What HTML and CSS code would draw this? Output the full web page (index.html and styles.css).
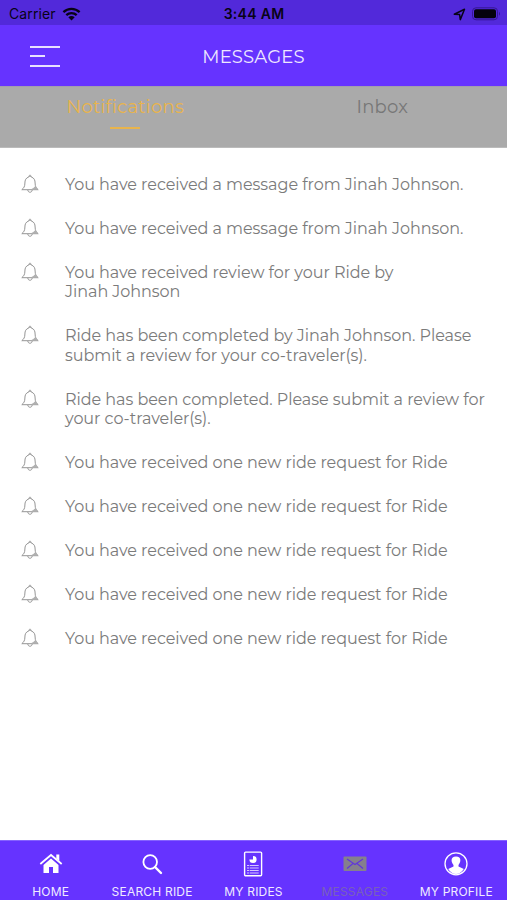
FILE: index.html
```html
<!DOCTYPE html>
<html lang="en">
<head>
<meta charset="utf-8">
<title>Messages</title>
<link rel="stylesheet" href="styles.css">
</head>
<body>
<svg class="defs" width="0" height="0" aria-hidden="true">
  <symbol id="bell" viewBox="0 0 18 20">
    <path d="M7.8 3C7.8 .6 10.2 .6 10.2 3C13.2 3.8 14.1 6.2 14.1 9C14.1 12.6 15.2 14 17.2 15.7H.8C2.8 14 3.9 12.6 3.9 9C3.9 6.2 4.8 3.8 7.8 3ZM6.8 16C7 19 11 19 11.2 16" fill="none" stroke="#969696" stroke-width="1"/>
    <path d="M8 2.8Q9 .6 10 2.8Z" fill="#888"/>
    <path d="M9.5 15.5Q12.5 14.5 14.4 12L17 15.7Z" fill="#b0b0b0"/>
  </symbol>
</svg>
<div class="app">
  <header class="status">
    <div class="carrier"><span>Carrier</span>
      <svg width="19" height="14" viewBox="0 0 19 14"><path d="M1.4 5.1C6 .8 13 .8 17.6 5.1M4.3 8.2C7.2 5.4 11.8 5.4 14.7 8.2" fill="none" stroke="#080316" stroke-width="2.3"/><path d="M6.3 10.3Q9.5 7.6 12.7 10.3L9.5 13.6Z" fill="#080316"/></svg>
    </div>
    <time>3:44 AM</time>
    <div class="device">
      <svg width="13" height="13" viewBox="0 0 13 13"><path d="M1.3 6.2L11.5 1.3L7.3 11.6L6.6 6.5Z" fill="none" stroke="#080316" stroke-width="1.5" stroke-linejoin="round"/></svg>
      <svg width="29" height="14" viewBox="0 0 29 14"><rect x=".5" y=".8" width="25" height="12" rx="3.5" fill="none" stroke="#361795"/><rect x="2" y="2.3" width="22" height="9" rx="2" fill="#05020c"/><path d="M27 4.8Q29 6.8 27 8.8Z" fill="#361795"/></svg>
    </div>
  </header>
  <div class="navbar">
    <div class="menu"><i></i><i class="short"></i><i></i></div>
    <h1>MESSAGES</h1>
  </div>
  <div class="tabs">
    <div class="tab active"><span>Notifications</span></div>
    <div class="tab"><span>Inbox</span></div>
  </div>
  <main class="list">
    <div class="row"><svg class="bell"><use href="#bell"/></svg><p>You have received a message from Jinah Johnson.</p></div>
    <div class="row"><svg class="bell"><use href="#bell"/></svg><p>You have received a message from Jinah Johnson.</p></div>
    <div class="row"><svg class="bell"><use href="#bell"/></svg><p>You have received review for your Ride by<br>Jinah Johnson</p></div>
    <div class="row"><svg class="bell"><use href="#bell"/></svg><p>Ride has been completed by Jinah Johnson. Please<br>submit a review for your co-traveler(s).</p></div>
    <div class="row"><svg class="bell"><use href="#bell"/></svg><p>Ride has been completed. Please submit a review for<br>your co-traveler(s).</p></div>
    <div class="row"><svg class="bell"><use href="#bell"/></svg><p>You have received one new ride request for Ride</p></div>
    <div class="row"><svg class="bell"><use href="#bell"/></svg><p>You have received one new ride request for Ride</p></div>
    <div class="row"><svg class="bell"><use href="#bell"/></svg><p>You have received one new ride request for Ride</p></div>
    <div class="row"><svg class="bell"><use href="#bell"/></svg><p>You have received one new ride request for Ride</p></div>
    <div class="row"><svg class="bell"><use href="#bell"/></svg><p>You have received one new ride request for Ride</p></div>
  </main>
  <nav class="bottom">
    <div class="item"><svg width="26" height="26" viewBox="0 0 26 26"><path d="M5.5 14L13 7.4L20.5 14V22H15V16H11V22H5.5Z" fill="#fff"/><path d="M2.3 13L13 4L23.7 13" fill="none" stroke="#fff" stroke-width="1.8"/><path d="M18.3 3.5H21.3V10L18.3 7.5Z" fill="#fff"/></svg><span>HOME</span></div>
    <div class="item"><svg width="26" height="26" viewBox="0 0 26 26"><circle cx="11.2" cy="11" r="6.8" fill="none" stroke="#fff" stroke-width="1.8"/><path d="M16 16L22 22" stroke="#fff" stroke-width="2.4" stroke-linecap="round"/></svg><span>SEARCH RIDE</span></div>
    <div class="item"><svg width="26" height="26" viewBox="0 0 26 26"><rect x="4.6" y="1.1" width="17" height="23.6" rx="1" fill="none" stroke="#fff" stroke-width="1.4"/><circle cx="13" cy="8.5" r="3.6" fill="#fff"/><path d="M13 8.5V4.5H9V8.5Z" fill="#6633ff"/><path d="M7 14.5H19M7 17H19M7 19.5H19M7 22H19" stroke="#d5c7ff" stroke-width="1.1" stroke-dasharray="2 .7 9"/></svg><span>MY RIDES</span></div>
    <div class="item current"><svg width="26" height="26" viewBox="0 0 26 26"><rect x="1.5" y="5.5" width="23" height="14.5" rx="1" fill="#85808d"/><path d="M5 8L13 13.5L21 8M5 17.5L11 12.5M21 17.5L15 12.5" fill="none" stroke="#6037d9" stroke-width="1.2"/></svg><span>MESSAGES</span></div>
    <div class="item"><svg width="26" height="26" viewBox="0 0 26 26"><circle cx="13" cy="12.8" r="11" fill="none" stroke="#fff" stroke-width="1.3"/><path d="M13 5.6C19 5.6 17.8 11.6 15.5 14V15.5L20.8 18Q17.5 23 13 23T5.2 18L10.5 15.5V14C8.2 11.6 7 5.6 13 5.6Z" fill="#fff"/></svg><span>MY PROFILE</span></div>
  </nav>
</div>
</body>
</html>
```
FILE: styles.css
```css
* { box-sizing: border-box; }
body { margin: 0; background: #fff; font-family: Montserrat, Inter, sans-serif; }
.defs { position: absolute; }
.app { width: 507px; height: 900px; display: flex; flex-direction: column; overflow: hidden; }
.status { height: 25px; flex: none; background: #5229da; color: #080316; display: grid; grid-template-columns: 1fr auto 1fr; align-items: center; padding: 3px 7px 0 9px; font: 14px/20px Inter, sans-serif; }
.carrier, .device { display: flex; align-items: center; gap: 6px; }
.carrier { letter-spacing: .1px; }
.device { justify-content: flex-end; }
.device svg:last-child { margin-right: -1px; }
.status time { font-weight: 600; letter-spacing: .3px; margin-right: 1px; }
.navbar { height: 61px; flex: none; background: #6633ff; display: grid; grid-template-columns: 1fr auto 1fr; align-items: center; padding: 1px 0 0 30px; }
.navbar::after { content: ""; margin-right: 30px; }
.menu { width: 30px; height: 21px; display: flex; flex-direction: column; justify-content: space-between; }
.menu i { height: 2px; background: #e8e0ff; }
.menu .short { width: 15px; }
h1 { margin: 1px 30px 0 0; color: #eee8ff; font-size: 18px; font-weight: 400; line-height: 24px; letter-spacing: .15px; }
.tabs { height: 62px; flex: none; background: #aaa; display: grid; grid-template-columns: 1fr 1fr; border-top: 1px solid #a39dae; border-bottom: 1px solid #bbb; color: #777; font-size: 18px; line-height: 24px; }
.tab { display: flex; flex-direction: column; align-items: center; padding: 8px 0 0 4px; letter-spacing: .2px; }
.tab.active { color: #e9b44c; padding: 8px 3px 0 0; letter-spacing: .25px; }
.tab.active::after { content: ""; width: 30px; height: 2px; background: #e9b44c; margin-top: 8px; }
.list { flex: 1; padding: 26px 0 0 21px; display: flex; flex-direction: column; gap: 24.45px; }
.row { display: flex; align-items: flex-start; gap: 26px; color: #7b7b7b; }
.bell { width: 18px; height: 20px; flex: none; margin-bottom: -.5px; }
.row p { margin: 1px 0 -1px; font-size: 16px; line-height: 19.5px; letter-spacing: -.05px; white-space: nowrap; }
.bottom { height: 60px; flex: none; background: #6633ff; border-top: 1px solid #8562ff; display: grid; grid-template-columns: repeat(5, 1fr); color: #f0eaff; }
.item { display: flex; flex-direction: column; align-items: center; padding: 10px 0 0; font: 12px/16px Inter, sans-serif; letter-spacing: .2px; white-space: nowrap; }
.item span { margin-top: 7px; }
.item svg { flex: none; }
.current { color: #7960b9; }
```
